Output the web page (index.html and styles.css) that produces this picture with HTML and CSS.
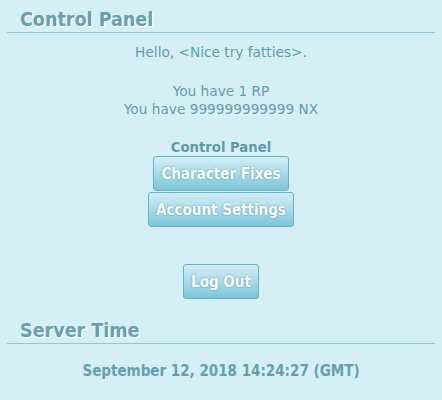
FILE: index.html
```html
<!DOCTYPE html>
<html>
<head>
<meta charset="utf-8">
<link rel="stylesheet" href="styles.css">
</head>
<body>
<div class="page">
  <h2 class="section-title">Control Panel</h2>
  <div class="section-body">
    <p class="greet">Hello, &lt;Nice try fatties&gt;.</p>
    <p class="stats">You have 1 RP<br>You have 999999999999 NX</p>
    <div class="panel-label">Control Panel</div>
    <div class="btn-stack">
      <button class="btn">Character Fixes</button>
      <button class="btn">Account Settings</button>
    </div>
    <div class="logout">
      <button class="btn">Log Out</button>
    </div>
  </div>
  <h2 class="section-title">Server Time</h2>
  <div class="time">September 12, 2018 14:24:27 (GMT)</div>
</div>
</body>
</html>
```
FILE: styles.css
```css
html, body {
  margin: 0;
  padding: 0;
  background: #d6eff7;
}
body {
  font-family: "DejaVu Sans", sans-serif;
  color: #5f9eae;
  font-size: 13.7px;
}
.page {
  margin: 0 7px;
  padding-top: 6px;
}
.section-title {
  margin: 0;
  padding: 2px 0 1px 13px;
  font-family: "DejaVu Sans Condensed", "DejaVu Sans", sans-serif;
  font-size: 19.5px;
  line-height: 23px;
  font-weight: bold;
  color: #67a0ae;
  border-bottom: 1px solid #8ec8d8;
  text-shadow: 1px 1px 0 #ffffff;
}
.section-body {
  text-align: center;
  padding-top: 10px;
  padding-bottom: 18px;
}
.greet {
  margin: 0;
  line-height: 18px;
}
.stats {
  margin: 21px 0 0;
  line-height: 18px;
}
.panel-label {
  margin-top: 20px;
  font-family: "DejaVu Sans Condensed", "DejaVu Sans", sans-serif;
  font-size: 14.7px;
  font-weight: bold;
  line-height: 18px;
  color: #5f9aa8;
}
.btn-stack {
  display: flex;
  flex-direction: column;
  align-items: center;
  gap: 1px;
}
.btn {
  font-family: "DejaVu Sans Condensed", "DejaVu Sans", sans-serif;
  font-size: 15px;
  font-weight: bold;
  color: #ffffff;
  text-shadow: 0 0 2px #4a98ac;
  padding: 0 7px;
  height: 35px;
  border: 1px solid #5db5ca;
  border-radius: 3px;
  background: linear-gradient(to bottom, #d3eef5 0%, #a9dbe8 50%, #7cc5d8 100%);
  cursor: pointer;
}
.logout {
  margin-top: 37px;
  display: flex;
  justify-content: center;
}
.time {
  text-align: center;
  font-family: "DejaVu Sans Condensed", "DejaVu Sans", sans-serif;
  font-size: 15px;
  font-weight: bold;
  color: #63a0b0;
  padding-top: 18px;
  line-height: 18px;
}
```
